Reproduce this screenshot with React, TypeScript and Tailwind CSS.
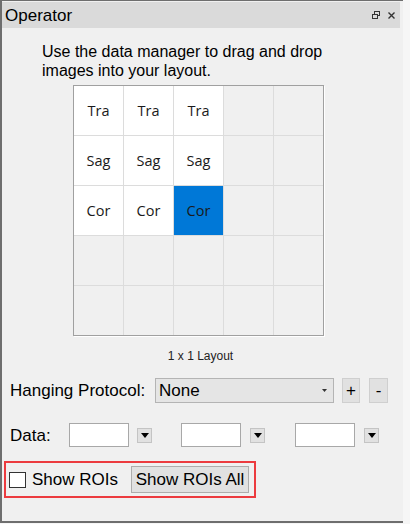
import React from 'react';

const cells = [
  ['Tra', 'Tra', 'Tra', '', ''],
  ['Sag', 'Sag', 'Sag', '', ''],
  ['Cor', 'Cor', 'Cor', '', ''],
  ['', '', '', '', ''],
  ['', '', '', '', ''],
];

const DropButton = () => (
  <div className="w-[15px] h-[15px] bg-[#e1e1e1] border border-[#c4c4c4] flex items-center justify-center">
    <svg width="8" height="5" viewBox="0 0 8 5">
      <path d="M0 0 H8 L4 5 Z" fill="#000" />
    </svg>
  </div>
);

const DataInput = () => (
  <div className="w-[60px] h-[24px] bg-white border border-[#a8a8a8]" />
);

export default function App() {
  return (
    <div className="w-[410px] h-[524px] bg-[#f6f6f6] font-['Liberation_Sans',Arial,sans-serif] text-black">
      <div className="w-[403px] h-[523px] border-l-2 border-t border-b-2 border-[#6e6e6e] bg-[#f0f0f0] flex flex-col">
        {/* title bar */}
        <div className="h-[26px] mt-px mr-[3px] bg-[#dadada] flex items-center justify-between pl-[3px] pr-[5px]">
          <span className="text-[17px] leading-none">Operator</span>
          <div className="flex items-center gap-[8px]">
            <svg width="8" height="8" viewBox="0 0 8 8">
              <rect x="2.5" y="0.5" width="5" height="4" fill="none" stroke="#333" strokeWidth="1" />
              <rect x="0.5" y="3.5" width="5" height="4" fill="#dadada" stroke="#333" strokeWidth="1" />
            </svg>
            <svg width="7" height="7" viewBox="0 0 7 7">
              <path d="M0.5 0.5 L6.5 6.5 M6.5 0.5 L0.5 6.5" stroke="#333" strokeWidth="1.4" />
            </svg>
          </div>
        </div>

        {/* instructions */}
        <p className="mt-[14px] pl-[40px] text-[16px] leading-[19px]">
          Use the data manager to drag and drop
          <br />
          images into your layout.
        </p>

        {/* layout grid */}
        <div className="mt-[5px] ml-[71px] w-[251px] border border-[#a0a0a0] shadow-[1px_1px_0_#ffffff] bg-[#dcdcdc] grid grid-cols-5 gap-px">
          {cells.map((row, r) =>
            row.map((label, c) => {
              const selected = r === 2 && c === 2;
              const filled = label !== '';
              return (
                <div
                  key={`${r}-${c}`}
                  className={`h-[49px] flex items-center justify-center font-['Open_Sans',sans-serif] text-[14.5px] text-[#1a1a1a] ${
                    selected ? 'bg-[#0078d7]' : filled ? 'bg-white' : 'bg-[#f0f0f0]'
                  }`}
                >
                  {label}
                </div>
              );
            })
          )}
        </div>

        <div className="mt-[13px] text-center text-[12px] leading-[14px] text-[#222] pr-[4px]">1 x 1 Layout</div>

        {/* hanging protocol */}
        <div className="mt-[15px] ml-[8px] flex items-center h-[25px]">
          <span className="w-[145px] text-[17px] leading-none">Hanging Protocol:</span>
          <div className="w-[179px] h-[25px] bg-[#e5e5e5] border border-[#b4b4b4] flex items-center justify-between pl-[3px] pr-[6px]">
            <span className="text-[17px] leading-none">None</span>
            <svg width="5" height="3" viewBox="0 0 5 3">
              <path d="M0 0 H5 L2.5 3 Z" fill="#333" />
            </svg>
          </div>
          <div className="ml-[8px] w-[18px] h-[25px] bg-[#e1e1e1] border border-[#cfcfcf] flex items-center justify-center text-[17px] leading-none">+</div>
          <div className="ml-[9px] w-[19px] h-[25px] bg-[#e1e1e1] border border-[#cfcfcf] flex items-center justify-center text-[17px] leading-none">-</div>
        </div>

        {/* data */}
        <div className="mt-[20px] ml-[8px] flex items-center h-[24px]">
          <span className="w-[59px] text-[17px] leading-none">Data:</span>
          <DataInput />
          <div className="ml-[8px]"><DropButton /></div>
          <div className="ml-[29px]"><DataInput /></div>
          <div className="ml-[9px]"><DropButton /></div>
          <div className="ml-[30px]"><DataInput /></div>
          <div className="ml-[9px]"><DropButton /></div>
        </div>

        {/* ROIs */}
        <div className="mt-[14px] ml-[2px] w-[252px] h-[37px] border-2 border-[#ec3b3f] flex items-center pl-[3px]">
          <div className="w-[17px] h-[16px] bg-white border border-[#333]" />
          <span className="ml-[6px] text-[17px] leading-none">Show ROIs</span>
          <div className="ml-[13px] w-[118px] h-[27px] bg-[#e1e1e1] border border-[#adadad] flex items-center justify-center text-[17px] leading-none">
            Show ROIs All
          </div>
        </div>
      </div>
    </div>
  );
}
